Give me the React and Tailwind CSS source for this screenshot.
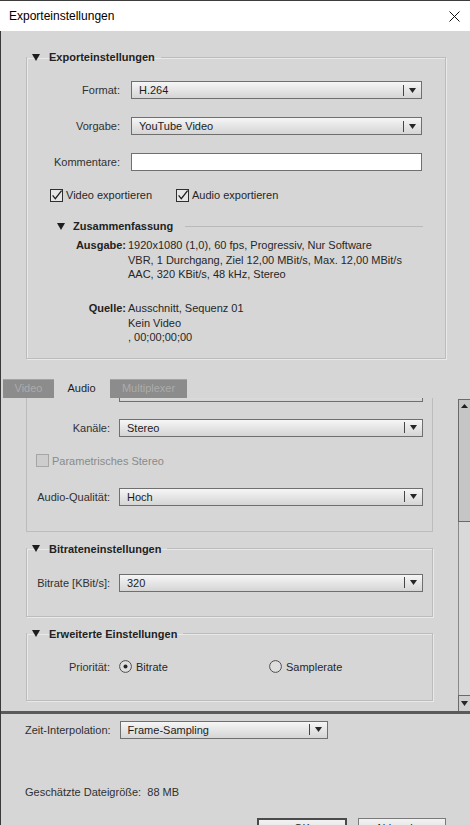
import React from 'react'

function Arrow({ className = '' }) {
  return (
    <svg width="7" height="5" viewBox="0 0 7 5" className={className}>
      <path d="M0 0h7L3.5 5z" fill="#262626" />
    </svg>
  )
}

function Select({ value, className = '' }) {
  return (
    <div className={`flex h-[18px] items-center border border-[#6f6f6f] bg-linear-to-b from-[#f6f6f6] to-[#d5d5d5] ${className}`}>
      <span className="flex-1 truncate pl-[7px] text-[11px] leading-[16px] text-[#1c1c1c]">{value}</span>
      <span className="h-[11px] w-px bg-[#454545]" />
      <span className="flex w-[17px] justify-center">
        <Arrow />
      </span>
    </div>
  )
}

function Checkbox({ checked, disabled }) {
  return (
    <svg width="13" height="13" viewBox="0 0 13 13" className="shrink-0">
      <rect x="0.5" y="0.5" width="12" height="12" fill={disabled ? '#cdcdcd' : '#e6e6e6'} stroke={disabled ? '#a6a6a6' : '#2f2f2f'} />
      {checked && <path d="M2.6 6.4 L5.3 9.6 L11.6 1.6" fill="none" stroke="#1f1f1f" strokeWidth="1.3" />}
    </svg>
  )
}

function Radio({ checked }) {
  return (
    <svg width="13" height="13" viewBox="0 0 13 13" className="shrink-0">
      <circle cx="6.5" cy="6.5" r="5.9" fill="#dedede" stroke="#4d4d4d" />
      {checked && <circle cx="6.5" cy="6.5" r="2" fill="#262626" />}
    </svg>
  )
}

function Triangle() {
  return (
    <svg width="8" height="7" viewBox="0 0 8 7" className="shrink-0">
      <path d="M0 0h8L4 7z" fill="#1e1e1e" />
    </svg>
  )
}

function Legend({ children }) {
  return (
    <legend className="flex h-[14px] items-center pl-[5px] pr-[6px]">
      <Triangle />
      <span className="ml-[9px] text-[11px] font-bold leading-[14px] text-[#222]">{children}</span>
    </legend>
  )
}

function Row({ label, labelWidth, gap, children, className = '' }) {
  return (
    <div className={`flex items-center ${className}`}>
      <span className="shrink-0 text-right text-[11px] leading-[14px] text-[#303030]" style={{ width: labelWidth, marginRight: gap }}>
        {label}
      </span>
      {children}
    </div>
  )
}

const panel = 'border border-[#bcbcbc] shadow-[inset_1px_1px_0_#e9e9e9,1px_1px_0_#e9e9e9]'

export default function App() {
  return (
    <div className="flex h-[825px] w-[470px] flex-col overflow-hidden bg-[#d6d6d6] font-['Liberation_Sans',Arial,sans-serif]">
      {/* title bar */}
      <div className="flex h-[31px] shrink-0 items-center justify-between border-t border-[#3c3c3c] bg-white pl-[9px] pr-[9px]">
        <span className="text-[12px] text-black">Exporteinstellungen</span>
        <svg width="11" height="11" viewBox="0 0 11 11" className="mr-[1px]">
          <path d="M0.5 0.5L10.5 10.5M10.5 0.5L0.5 10.5" stroke="#111" strokeWidth="1" />
        </svg>
      </div>

      <div className="flex flex-1 flex-col border-l border-[#3a3a3a]">
        {/* export settings */}
        <fieldset className={`ml-[25px] mt-[19px] w-[420px] pb-[13px] ${panel}`}>
          <Legend>Exporteinstellungen</Legend>
          <Row label="Format:" labelWidth={93} gap={11} className="mt-[17px]">
            <Select value="H.264" className="w-[291px]" />
          </Row>
          <Row label="Vorgabe:" labelWidth={93} gap={11} className="mt-[18px]">
            <Select value="YouTube Video" className="w-[291px]" />
          </Row>
          <Row label="Kommentare:" labelWidth={93} gap={11} className="mt-[18px]">
            <div className="h-[18px] w-[291px] border border-[#707070] bg-white" />
          </Row>
          <div className="mt-[17px] flex items-center pl-[23px] text-[11px] leading-[14px] text-[#262626]">
            <Checkbox checked />
            <span className="ml-[3px]">Video exportieren</span>
            <span className="ml-[24px]">
              <Checkbox checked />
            </span>
            <span className="ml-[3px]">Audio exportieren</span>
          </div>

          <div className="mt-[17px] flex h-[14px] items-center pl-[30px] pr-[22px]">
            <Triangle />
            <span className="ml-[8px] text-[11px] font-bold text-[#222]">Zusammenfassung</span>
            <span className="ml-[12px] h-px flex-1 bg-[#b9b9b9]" />
          </div>

          <div className="mt-[5px] flex text-[11px] leading-[14.5px] text-[#262626]">
            <span className="w-[99px] shrink-0 text-right font-bold text-[#222]">Ausgabe:</span>
            <div className="ml-[2px]">
              <div>1920x1080 (1,0), 60 fps, Progressiv, Nur Software</div>
              <div>VBR, 1 Durchgang, Ziel 12,00 MBit/s, Max. 12,00 MBit/s</div>
              <div>AAC, 320 KBit/s, 48 kHz, Stereo</div>
            </div>
          </div>
          <div className="mt-[19.5px] flex text-[11px] leading-[14.5px] text-[#262626]">
            <span className="w-[99px] shrink-0 text-right font-bold text-[#222]">Quelle:</span>
            <div className="ml-[2px]">
              <div>Ausschnitt, Sequenz 01</div>
              <div>Kein Video</div>
              <div>, 00;00;00;00</div>
            </div>
          </div>
        </fieldset>

        {/* tabs */}
        <div className="mt-[20px] flex h-[19px] items-stretch pl-[2px] text-[11px]">
          <div className="flex w-[51px] items-center justify-center border-t border-[#a3a3a3] bg-[#8c8c8c] text-[#ababab]">Video</div>
          <div className="ml-[1px] flex w-[53px] items-center justify-center text-[#1e1e1e]">Audio</div>
          <div className="ml-[2px] flex w-[77px] items-center justify-center border-t border-[#a3a3a3] bg-[#8c8c8c] text-[#ababab]">Multiplexer</div>
        </div>

        {/* scroll area */}
        <div className="flex h-[313px] shrink-0">
          <div className="flex-1 overflow-hidden">
            <div className="ml-[25px] w-[407px] border-x border-b border-[#bcbcbc] pb-[25px]">
              <Row label="" labelWidth={83} gap={9} className="-mt-[14px]">
                <Select value="" className="w-[304px]" />
              </Row>
              <Row label="Kanäle:" labelWidth={83} gap={9} className="mt-[17px]">
                <Select value="Stereo" className="w-[304px]" />
              </Row>
              <div className="mt-[17px] flex items-center pl-[9px] text-[11px] leading-[14px] text-[#8a8a8a]">
                <Checkbox disabled />
                <span className="ml-[3px]">Parametrisches Stereo</span>
              </div>
              <Row label="Audio-Qualität:" labelWidth={83} gap={9} className="mt-[20px]">
                <Select value="Hoch" className="w-[304px]" />
              </Row>
            </div>

            <fieldset className={`ml-[25px] mt-[10px] w-[407px] pb-[24px] ${panel}`}>
              <Legend>Bitrateneinstellungen</Legend>
              <Row label="Bitrate [KBit/s]:" labelWidth={83} gap={9} className="mt-[18px]">
                <Select value="320" className="w-[304px]" />
              </Row>
            </fieldset>

            <fieldset className={`ml-[25px] mt-[10px] w-[407px] pb-[26px] ${panel}`}>
              <Legend>Erweiterte Einstellungen</Legend>
              <Row label="Priorität:" labelWidth={83} gap={9} className="mt-[19px]">
                <div className="flex items-center text-[11px] leading-[14px] text-[#262626]">
                  <Radio checked />
                  <span className="ml-[4px] w-[133px]">Bitrate</span>
                  <Radio />
                  <span className="ml-[4px]">Samplerate</span>
                </div>
              </Row>
            </fieldset>
          </div>

          {/* scrollbar */}
          <div className="mt-[1px] flex w-[12px] flex-col">
            <div className="flex h-[123px] justify-center border-l border-t border-b border-[#6a6a6a] bg-[#c5c5c5] pt-[4px]">
              <svg width="7" height="4" viewBox="0 0 7 4">
                <path d="M0 4h7L3.5 0z" fill="#1e1e1e" />
              </svg>
            </div>
            <div className="flex-1 border-l border-[#8a8a8a] bg-[#d9d9d9]" />
            <div className="flex h-[16px] justify-center border-l border-t border-[#6a6a6a] bg-[#cfcfcf] pt-[5px]">
              <Arrow />
            </div>
          </div>
        </div>

        <div className="h-[3px] shrink-0 bg-[#5a5a5a]" />

        {/* bottom */}
        <div className="pl-[24px]">
          <Row label="Zeit-Interpolation:" labelWidth="auto" gap={9} className="mt-[7px]">
            <Select value="Frame-Sampling" className="w-[208px]" />
          </Row>
          <div className="mt-[46px] text-[11px] leading-[14px] text-[#303030]">
            Geschätzte Dateigröße:&nbsp; 88 MB
          </div>
          <div className="mt-[19px] flex text-[11px] text-[#1e1e1e]">
            <div className="ml-[232px] flex h-[22px] w-[90px] items-center justify-center border-2 border-[#4a4a4a] bg-linear-to-b from-[#f2f2f2] to-[#d8d8d8]">OK</div>
            <div className="ml-[11px] flex h-[22px] w-[88px] items-center justify-center border border-[#7a7a7a] bg-linear-to-b from-[#f2f2f2] to-[#d8d8d8]">Abbrechen</div>
          </div>
        </div>
      </div>
    </div>
  )
}
